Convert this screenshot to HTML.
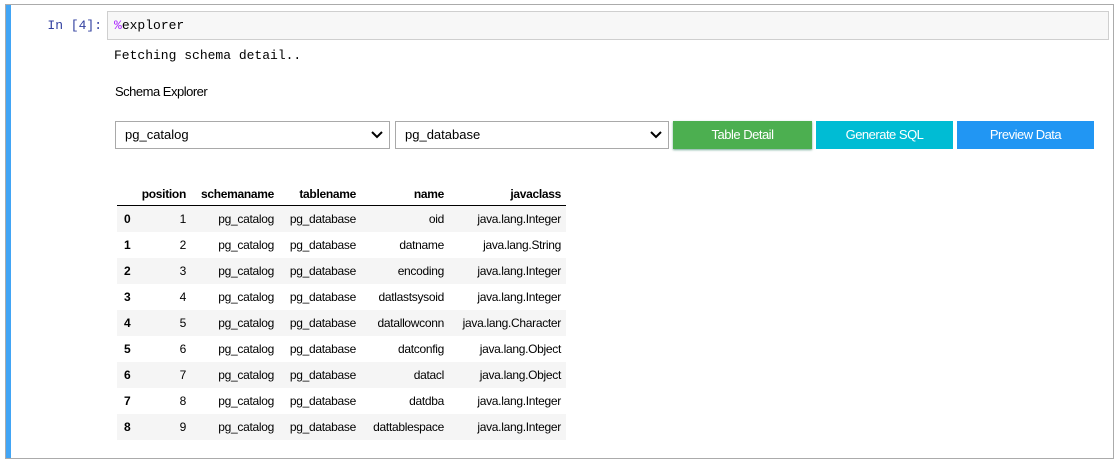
<!DOCTYPE html>
<html><head><style>
body{margin:0;background:#fff;width:1119px;height:462px;position:relative;overflow:hidden;font-family:"Liberation Sans",Arial,sans-serif;}
.cell{position:absolute;left:5px;top:4px;width:1107px;height:453px;border:1px solid #ababab;}
.bar{position:absolute;left:6px;top:5px;width:5px;height:453px;background:#42a5f5;}
.prompt{position:absolute;left:30px;top:18px;width:72px;text-align:right;font:13px "Liberation Mono",monospace;color:#303f9f;}
.input{position:absolute;left:107px;top:11px;height:29px;background:#f7f7f7;border:1px solid #cfcfcf;font:13px "Liberation Mono",monospace;line-height:28px;padding-left:6px;box-sizing:border-box;width:1002px;}
.mono{position:absolute;left:114px;top:48px;font:13px "Liberation Mono",monospace;color:#000;}
.lbl{position:absolute;left:115px;top:84px;font-size:13px;letter-spacing:-0.5px;}
.sel{position:absolute;top:121px;height:28px;border:1px solid #a9a9a9;box-sizing:border-box;font-size:13px;line-height:26px;padding-left:9px;background:#fff;}
.sel svg{position:absolute;right:6px;top:9px;}
.btn{position:absolute;top:121px;height:28px;color:#fff;font-size:13px;text-align:center;line-height:28px;letter-spacing:-0.5px;}
table{position:absolute;left:117px;top:183px;border-collapse:collapse;font-size:12px;table-layout:fixed;width:449px;letter-spacing:-0.3px;}
td,th{height:26px;padding:0 5px 0 0;text-align:right;white-space:nowrap;overflow:visible;}
th{font-weight:bold;height:22px;border-bottom:1px solid #000;}
tr.s td{background:#f5f5f5;}
td.i{font-weight:bold;text-align:left;padding-left:7px;}
</style></head><body>
<div class="cell"></div><div class="bar"></div>
<div class="prompt">In [4]:</div>
<div class="input"><span style="color:#aa22ff">%</span>explorer</div>
<div class="mono">Fetching schema detail..</div>
<div class="lbl">Schema Explorer</div>
<div class="sel" style="left:115px;width:275px">pg_catalog<svg width="12" height="8"><path d="M1 1L6 6L11 1" stroke="#000" stroke-width="2" fill="none"/></svg></div>
<div class="sel" style="left:395px;width:274px">pg_database<svg width="12" height="8"><path d="M1 1L6 6L11 1" stroke="#000" stroke-width="2" fill="none"/></svg></div>
<div class="btn" style="left:673px;width:139px;background:#4caf50;box-shadow:0 1px 2px #7a9">Table Detail</div>
<div class="btn" style="left:816px;width:137px;background:#00bcd4">Generate SQL</div>
<div class="btn" style="left:957px;width:137px;background:#2196f3">Preview Data</div>
<table>
<colgroup><col style="width:23px"><col style="width:51px"><col style="width:88px"><col style="width:82px"><col style="width:88px"><col style="width:117px"></colgroup>
<tr><th></th><th>position</th><th>schemaname</th><th>tablename</th><th>name</th><th>javaclass</th></tr>
<tr class="s"><td class="i">0</td><td>1</td><td>pg_catalog</td><td>pg_database</td><td>oid</td><td>java.lang.Integer</td></tr>
<tr><td class="i">1</td><td>2</td><td>pg_catalog</td><td>pg_database</td><td>datname</td><td>java.lang.String</td></tr>
<tr class="s"><td class="i">2</td><td>3</td><td>pg_catalog</td><td>pg_database</td><td>encoding</td><td>java.lang.Integer</td></tr>
<tr><td class="i">3</td><td>4</td><td>pg_catalog</td><td>pg_database</td><td>datlastsysoid</td><td>java.lang.Integer</td></tr>
<tr class="s"><td class="i">4</td><td>5</td><td>pg_catalog</td><td>pg_database</td><td>datallowconn</td><td>java.lang.Character</td></tr>
<tr><td class="i">5</td><td>6</td><td>pg_catalog</td><td>pg_database</td><td>datconfig</td><td>java.lang.Object</td></tr>
<tr class="s"><td class="i">6</td><td>7</td><td>pg_catalog</td><td>pg_database</td><td>datacl</td><td>java.lang.Object</td></tr>
<tr><td class="i">7</td><td>8</td><td>pg_catalog</td><td>pg_database</td><td>datdba</td><td>java.lang.Integer</td></tr>
<tr class="s"><td class="i">8</td><td>9</td><td>pg_catalog</td><td>pg_database</td><td>dattablespace</td><td>java.lang.Integer</td></tr>
</table>
</body></html>
